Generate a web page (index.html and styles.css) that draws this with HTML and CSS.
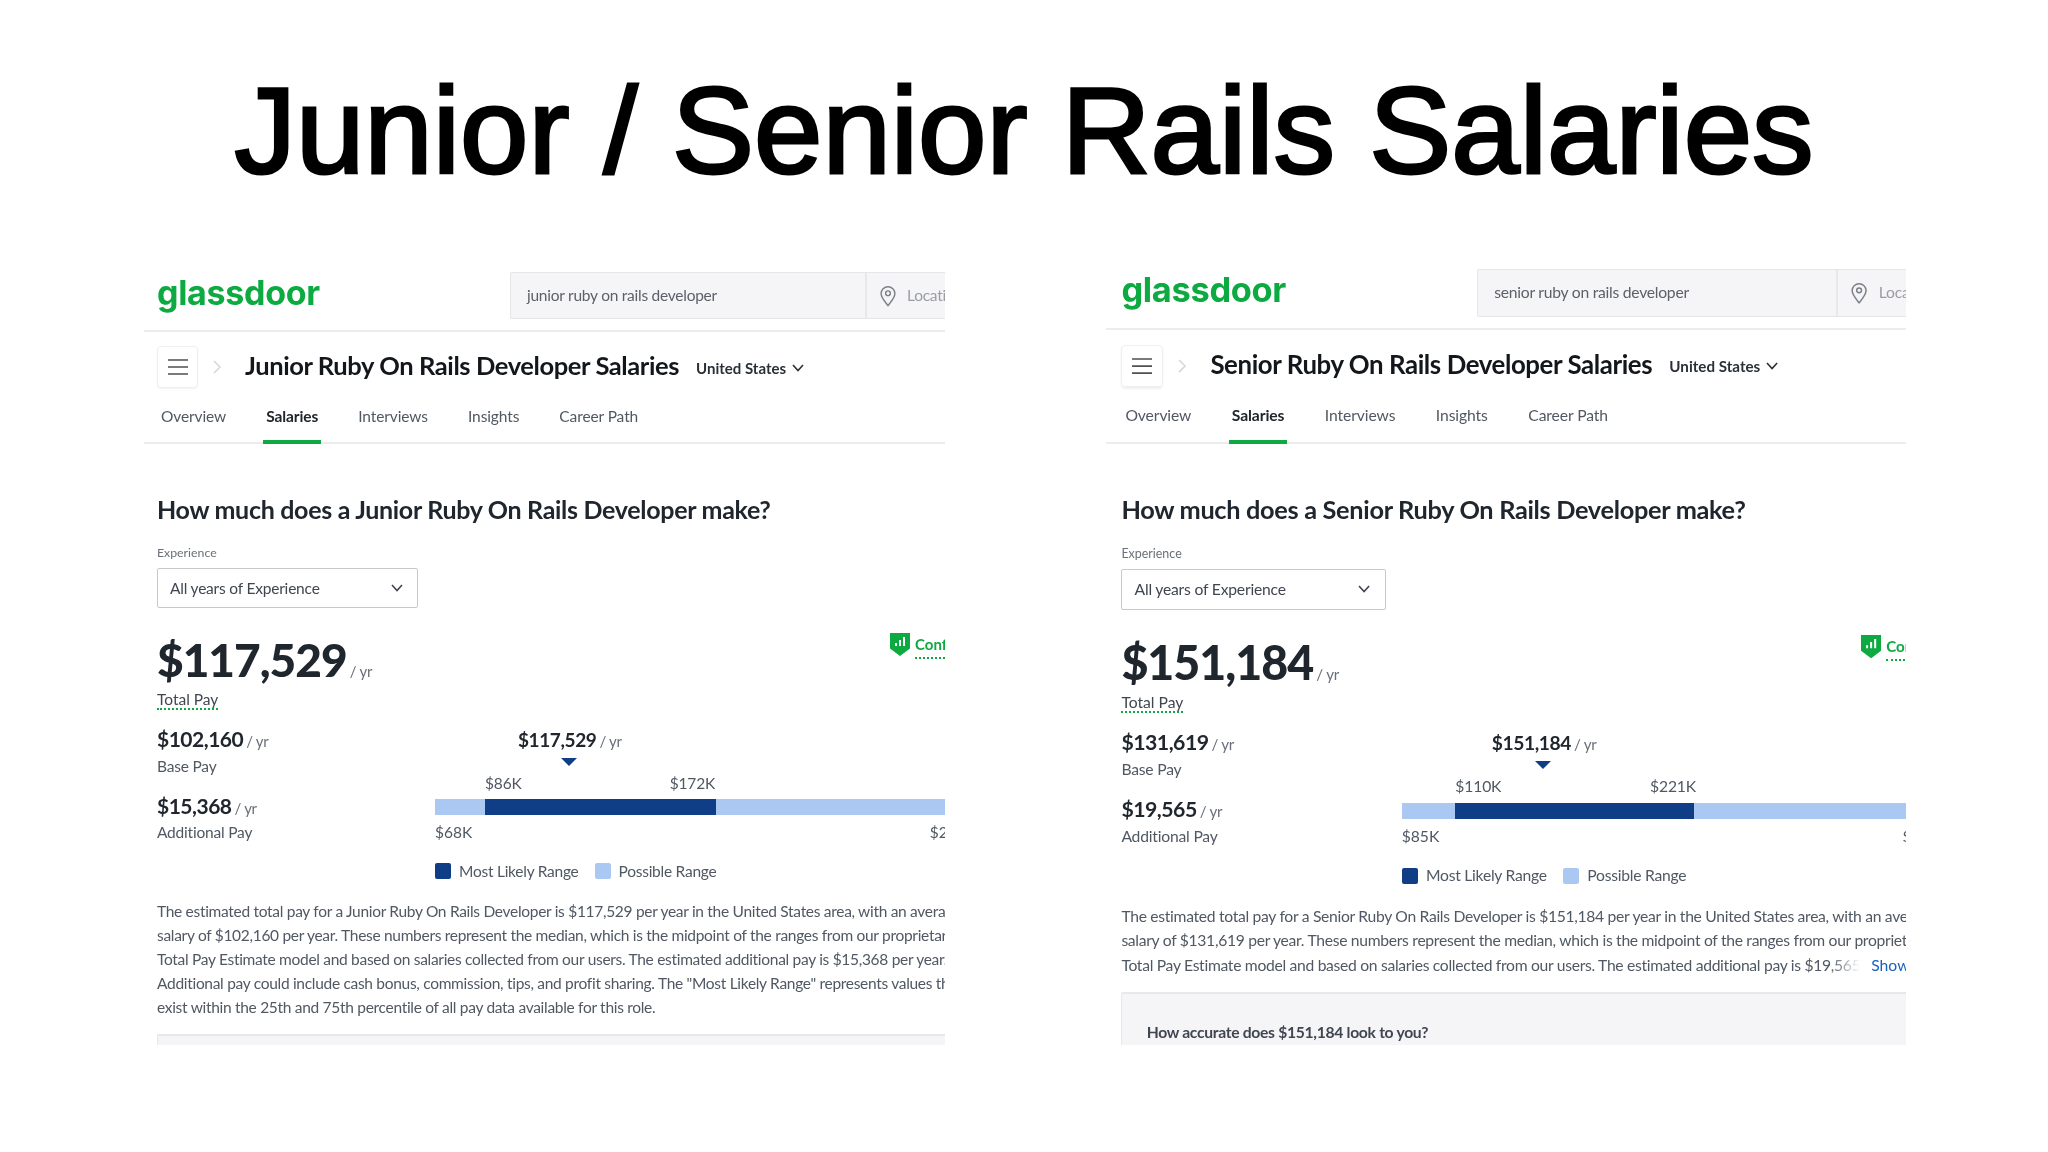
FILE: index.html
```html
<!DOCTYPE html>
<html lang="en">
<head>
<meta charset="utf-8">
<title>Junior / Senior Rails Salaries</title>
<link rel="stylesheet" href="styles.css">
</head>
<body>
<main class="slide">
<h1 class="slide-title">Junior / Senior Rails Salaries</h1>
<div class="panels">

<section class="panel panel-junior">
  <header class="site-header">
    <div class="logo">glassdoor</div>
    <div class="search">
      <div class="search-job">junior ruby on rails developer</div>
      <div class="search-loc">
        <svg class="pin" viewBox="0 0 18 24"><path d="M9 22.5C5 17.5 1.5 13.800 1.500 9.300a7.500 7.500 0 0 1 15 0C16.500 13.800 13 17.500 9 22.500Z"/><circle cx="9" cy="9" r="2.600"/></svg>
        <span>Location</span>
      </div>
    </div>
  </header>
  <div class="crumb">
    <div class="menu-btn"><svg viewBox="0 0 20 16"><path d="M0 1h20M0 8h20M0 15h20"/></svg></div>
    <svg class="crumb-chev" viewBox="0 0 8 14"><path d="M1 1l6 6-6 6"/></svg>
    <div class="crumb-title">Junior Ruby On Rails Developer Salaries</div>
    <div class="country">United States<svg viewBox="0 0 12 8"><path d="M1 1l5 5.500L11 1"/></svg></div>
  </div>
  <nav class="tabs">
    <span class="tab">Overview</span><span class="tab tab-active">Salaries</span><span class="tab">Interviews</span><span class="tab">Insights</span><span class="tab">Career Path</span>
  </nav>
  <div class="content">
    <h2 class="question">How much does a Junior Ruby On Rails Developer make?</h2>
    <div class="field-label">Experience</div>
    <div class="select">All years of Experience<svg viewBox="0 0 12 8"><path d="M1 1l5 5.500L11 1"/></svg></div>
    <div class="total-row">
      <div class="total-value"><span class="price">$117,529</span><span class="per">/ yr</span></div>
      <div class="confidence">
        <svg viewBox="0 0 20 24"><path class="shield" d="M0 1h20v15.500L10 24 0 16.500Z"/><path class="shield-bars" d="M6 14v-3M10 14V8M14 14V5"/></svg>
        <span>Confident</span>
      </div>
    </div>
    <div class="total-label"><span>Total Pay</span></div>
    <div class="pay-grid">
      <div class="pay-col">
        <div class="pay-amount"><b>$102,160</b><span class="per-sm">/ yr</span></div>
        <div class="pay-label">Base Pay</div>
        <div class="pay-amount pay-second"><b>$15,368</b><span class="per-sm">/ yr</span></div>
        <div class="pay-label pay-label-second">Additional Pay</div>
      </div>
      <div class="chart">
        <div class="pay-amount chart-value jr-value"><b>$117,529</b><span class="per-sm">/ yr</span></div>
        <div class="marker jr-marker"></div>
        <div class="ticks"><span class="jr-tick-a">$86K</span><span class="jr-tick-b">$172K</span></div>
        <div class="bar"><div class="bar-low jr-low"></div><div class="bar-mid jr-mid"></div><div class="bar-high"></div></div>
        <div class="range-ends"><span>$68K</span><span>$273K</span></div>
        <div class="legend">
          <i class="swatch swatch-dark"></i><span>Most Likely Range</span>
          <i class="swatch swatch-light"></i><span>Possible Range</span>
        </div>
      </div>
    </div>
    <div class="para">
      <div>The estimated total pay for a Junior Ruby On Rails Developer is $117,529 per year in the United States area, with an average</div>
      <div>salary of $102,160 per year. These numbers represent the median, which is the midpoint of the ranges from our proprietary</div>
      <div>Total Pay Estimate model and based on salaries collected from our users. The estimated additional pay is $15,368 per year.</div>
      <div>Additional pay could include cash bonus, commission, tips, and profit sharing. The "Most Likely Range" represents values that</div>
      <div>exist within the 25th and 75th percentile of all pay data available for this role.</div>
    </div>
    <div class="feedback">How accurate does $117,529 look to you?</div>
  </div>
</section>

<section class="panel panel-senior">
  <header class="site-header">
    <div class="logo">glassdoor</div>
    <div class="search">
      <div class="search-job">senior ruby on rails developer</div>
      <div class="search-loc">
        <svg class="pin" viewBox="0 0 18 24"><path d="M9 22.5C5 17.5 1.5 13.800 1.500 9.300a7.500 7.500 0 0 1 15 0C16.500 13.800 13 17.500 9 22.500Z"/><circle cx="9" cy="9" r="2.600"/></svg>
        <span>Location</span>
      </div>
    </div>
  </header>
  <div class="crumb">
    <div class="menu-btn"><svg viewBox="0 0 20 16"><path d="M0 1h20M0 8h20M0 15h20"/></svg></div>
    <svg class="crumb-chev" viewBox="0 0 8 14"><path d="M1 1l6 6-6 6"/></svg>
    <div class="crumb-title">Senior Ruby On Rails Developer Salaries</div>
    <div class="country">United States<svg viewBox="0 0 12 8"><path d="M1 1l5 5.500L11 1"/></svg></div>
  </div>
  <nav class="tabs">
    <span class="tab">Overview</span><span class="tab tab-active">Salaries</span><span class="tab">Interviews</span><span class="tab">Insights</span><span class="tab">Career Path</span>
  </nav>
  <div class="content">
    <h2 class="question">How much does a Senior Ruby On Rails Developer make?</h2>
    <div class="field-label">Experience</div>
    <div class="select">All years of Experience<svg viewBox="0 0 12 8"><path d="M1 1l5 5.500L11 1"/></svg></div>
    <div class="total-row">
      <div class="total-value"><span class="price">$151,184</span><span class="per">/ yr</span></div>
      <div class="confidence">
        <svg viewBox="0 0 20 24"><path class="shield" d="M0 1h20v15.500L10 24 0 16.500Z"/><path class="shield-bars" d="M6 14v-3M10 14V8M14 14V5"/></svg>
        <span>Confident</span>
      </div>
    </div>
    <div class="total-label"><span>Total Pay</span></div>
    <div class="pay-grid">
      <div class="pay-col">
        <div class="pay-amount"><b>$131,619</b><span class="per-sm">/ yr</span></div>
        <div class="pay-label">Base Pay</div>
        <div class="pay-amount pay-second"><b>$19,565</b><span class="per-sm">/ yr</span></div>
        <div class="pay-label pay-label-second">Additional Pay</div>
      </div>
      <div class="chart">
        <div class="pay-amount chart-value sr-value"><b>$151,184</b><span class="per-sm">/ yr</span></div>
        <div class="marker sr-marker"></div>
        <div class="ticks"><span class="sr-tick-a">$110K</span><span class="sr-tick-b">$221K</span></div>
        <div class="bar"><div class="bar-low sr-low"></div><div class="bar-mid sr-mid"></div><div class="bar-high"></div></div>
        <div class="range-ends"><span>$85K</span><span>$350K</span></div>
        <div class="legend">
          <i class="swatch swatch-dark"></i><span>Most Likely Range</span>
          <i class="swatch swatch-light"></i><span>Possible Range</span>
        </div>
      </div>
    </div>
    <div class="para">
      <div>The estimated total pay for a Senior Ruby On Rails Developer is $151,184 per year in the United States area, with an average</div>
      <div>salary of $131,619 per year. These numbers represent the median, which is the midpoint of the ranges from our proprietary</div>
      <div class="para-more"><span class="para-fade">Total Pay Estimate model and based on salaries collected from our users. The estimated additional pay is $19,565 per year.</span><span class="show-more">Show More</span></div>
    </div>
    <div class="feedback">How accurate does $151,184 look to you?</div>
  </div>
</section>

</div>
</main>
</body>
</html>
```
FILE: styles.css
```css
* { box-sizing: border-box; }
html, body { margin: 0; background: #fff; }
body { width: 2048px; height: 1152px; overflow: hidden; font-family: "Lato", sans-serif; }

.slide { width: 2048px; height: 1152px; }
.slide-title {
  margin: 0;
  height: 269px;
  padding-top: 60px;
  text-align: center;
  font: 400 123px/1.15 "Liberation Sans", Arial, sans-serif;
  -webkit-text-stroke: 3px #000;
  color: #000;
}
.panels {
  display: flex;
  align-items: flex-end;
  height: 776px;
  padding-left: 144px;
}

.panel {
  --pad: 13px;
  overflow: hidden;
  background: #fff;
  color: #20262e;
  filter: blur(0.45px);
}
.panel-junior { width: 801px; height: 773px; }
.panel-senior {
  --pad: 14.800px;
  zoom: 1.012;
  width: 790.500px;
  height: 767px;
  margin-left: 159.500px;
}

/* Site header */
.site-header {
  display: flex;
  padding: 0 0 11px var(--pad);
  border-bottom: 2px solid #ececec;
}
.logo {
  flex: 0 0 353px;
  font-family: "Inter", sans-serif;
  font-size: 34px;
  font-weight: 700;
  line-height: 42px;
  letter-spacing: -0.300px;
  color: #0caa41;
}
.panel-senior .logo { flex-basis: 351.500px; }
.search {
  flex: 1;
  display: flex;
  height: 47px;
  background: #f5f5f8;
  border: 1px solid #e6e6e8;
  border-right: 0;
  border-radius: 2px 0 0 2px;
  font-size: 15.500px;
  line-height: 45px;
  letter-spacing: -0.250px;
  color: #5c6068;
  white-space: nowrap;
}
.panel-senior .search { height: 48px; }
.search-job { flex: 0 0 356px; padding-left: 16px; border-right: 2px solid #e8e8ea; }
.search-loc { display: flex; align-items: center; padding-left: 12px; color: #9a9da3; }
.pin { width: 18px; height: 22px; margin-right: 10px; fill: none; stroke: #7c8087; stroke-width: 1.600; }

/* Breadcrumb row */
.crumb {
  display: flex;
  align-items: center;
  padding: 14px 0 0 var(--pad);
  white-space: nowrap;
}
.menu-btn {
  display: flex;
  align-items: center;
  justify-content: center;
  width: 41px;
  height: 42px;
  border: 1px solid #efefef;
  border-radius: 4px;
  box-shadow: 0 1px 2px rgba(0,0,0,.06);
}
.menu-btn svg { width: 20px; height: 16px; fill: none; stroke: #505050; stroke-width: 1.700; }
.crumb-chev { width: 8px; height: 14px; margin: 0 24px 0 15px; fill: none; stroke: #d4d6d8; stroke-width: 1.500; }
.crumb-title { margin-top: -4px; font-size: 25.500px; font-weight: 700; letter-spacing: -0.400px; color: #13171c; }
.country { display: flex; align-items: center; margin: 1px 0 0 17px; font-size: 15px; font-weight: 700; color: #2a3038; }
.country svg { width: 12px; height: 8px; margin-left: 6px; fill: none; stroke: #2a3038; stroke-width: 1.600; }

/* Tabs */
.tabs {
  display: flex;
  gap: 34px;
  margin-top: 18px;
  padding-left: calc(var(--pad) + 1px);
  border-bottom: 2px solid #ececec;
  font-size: 15.500px;
  letter-spacing: -0.100px;
  color: #505863;
}
.tab { height: 38px; padding: 0 3px; line-height: 20px; margin-bottom: -2px; border-bottom: 4px solid transparent; }
.tab-active { font-weight: 700; color: #20262e; border-bottom-color: #0caa41; }

/* Content */
.content { padding-left: var(--pad); }
.question { margin: 47px 0 0; font-size: 25px; line-height: 36px; font-weight: 700; letter-spacing: -0.300px; color: #20262e; white-space: nowrap; }
.field-label { margin-top: 18px; font-size: 12.300px; line-height: 16px; color: #6a707a; }
.select {
  display: flex;
  justify-content: space-between;
  align-items: center;
  width: 261px;
  height: 40px;
  margin-top: 7px;
  padding: 0 14px 0 12px;
  border: 1px solid #c8c9cc;
  border-radius: 2px;
  font-size: 15.500px;
  letter-spacing: -0.200px;
  color: #404650;
}
.select svg { width: 12px; height: 8px; fill: none; stroke: #404650; stroke-width: 1.600; }

.total-row { display: flex; justify-content: space-between; margin-top: 22px; height: 59px; white-space: nowrap; }
.price { font-size: 46px; line-height: 60px; font-weight: 900; letter-spacing: -1px; color: #20262e; }
.per { margin-left: 3px; font-size: 15px; letter-spacing: -0.200px; color: #6a707a; }
.confidence { display: flex; flex: 0 0 55px; height: 30px; overflow: hidden; margin-top: 2px; color: #0caa41; font-size: 15px; font-weight: 700; }
.panel-senior .confidence { flex-basis: 45px; }
.confidence svg { flex: 0 0 20px; height: 24px; margin-right: 5px; }
.confidence span { line-height: 24px; border-bottom: 2px dotted #0caa41; height: 27px; }
.shield { fill: #0caa41; }
.shield-bars { fill: none; stroke: #fff; stroke-width: 2; }

.total-label { font-size: 15.500px; line-height: 20px; color: #404650; }
.total-label span { display: inline-block; border-bottom: 2px dotted #0caa41; line-height: 18px; }

.pay-grid { display: flex; margin-top: 15.500px; }
.pay-col { flex: 0 0 278px; }
.panel-senior .pay-col { flex-basis: 277px; }
.pay-amount { font-size: 15px; line-height: 26px; color: #6a707a; white-space: nowrap; }
.pay-amount b { font-size: 21px; font-weight: 700; letter-spacing: -0.500px; color: #20262e; }
.per-sm { margin-left: 3px; letter-spacing: -0.300px; }
.pay-label { margin-top: -1px; font-size: 15.500px; line-height: 26px; letter-spacing: -0.200px; color: #505863; }
.pay-second { margin-top: 14px; }
.pay-label-second { margin-top: -2px; }
.chart { flex: 0 0 560px; margin-top: 1.500px; font-size: 15.500px; color: #505863; }
.chart-value { height: 26px; }
.chart-value b { font-size: 19px; letter-spacing: -0.400px; }
.jr-value { margin-left: 83px; }
.sr-value { margin-left: 89px; }
.marker { width: 0; height: 0; margin-top: 5px; border: 8px solid transparent; border-top-color: #0f3e86; border-bottom: 0; }
.jr-marker { margin-left: 126px; }
.sr-marker { margin-left: 132px; }
.ticks { display: flex; height: 22px; margin-top: 6px; line-height: 22px; letter-spacing: -0.150px; }
.jr-tick-a { margin-left: 50px; }
.jr-tick-b { margin-left: 148px; }
.sr-tick-a { margin-left: 53px; }
.sr-tick-b { margin-left: 147px; }
.bar { display: flex; height: 16px; margin-top: 5px; border-radius: 2px; background: #abc8f3; }
.bar-low, .bar-high { background: #abc8f3; }
.bar-high { flex: 1; }
.bar-mid { background: #0f3e86; }
.jr-low { width: 50px; }
.jr-mid { width: 231px; }
.sr-low { width: 53px; }
.sr-mid { width: 236px; }
.range-ends { display: flex; justify-content: space-between; width: 541px; height: 22px; margin-top: 6px; line-height: 22px; }
.legend { display: flex; align-items: center; gap: 8px; margin-top: 17px; line-height: 22px; letter-spacing: -0.250px; }
.swatch { width: 16px; height: 16px; border-radius: 2px; }
.swatch-dark { background: #0f3e86; }
.swatch-light { margin-left: 8px; background: #abc8f3; }

.para { margin-top: 17px; font-size: 15.500px; line-height: 24px; letter-spacing: -0.300px; color: #505863; white-space: nowrap; }
.para-more { display: flex; }
.para-fade {
  flex: 0 0 730px;
  overflow: hidden;
  -webkit-mask-image: linear-gradient(to right, #000 96%, transparent 100%);
  mask-image: linear-gradient(to right, #000 96%, transparent 100%);
}
.show-more { margin-left: 11px; letter-spacing: 0; color: #1861bf; }

.feedback {
  height: 120px;
  margin-top: 15px;
  padding: 27px 24px;
  background: #f5f5f8;
  border-top: 2px solid #e8e8ea;
  border-left: 1px solid #e8e8ea;
  border-radius: 2px 0 0 0;
  font-size: 15.500px;
  line-height: 22px;
  font-weight: 700;
  letter-spacing: -0.300px;
  color: #404650;
}
```
